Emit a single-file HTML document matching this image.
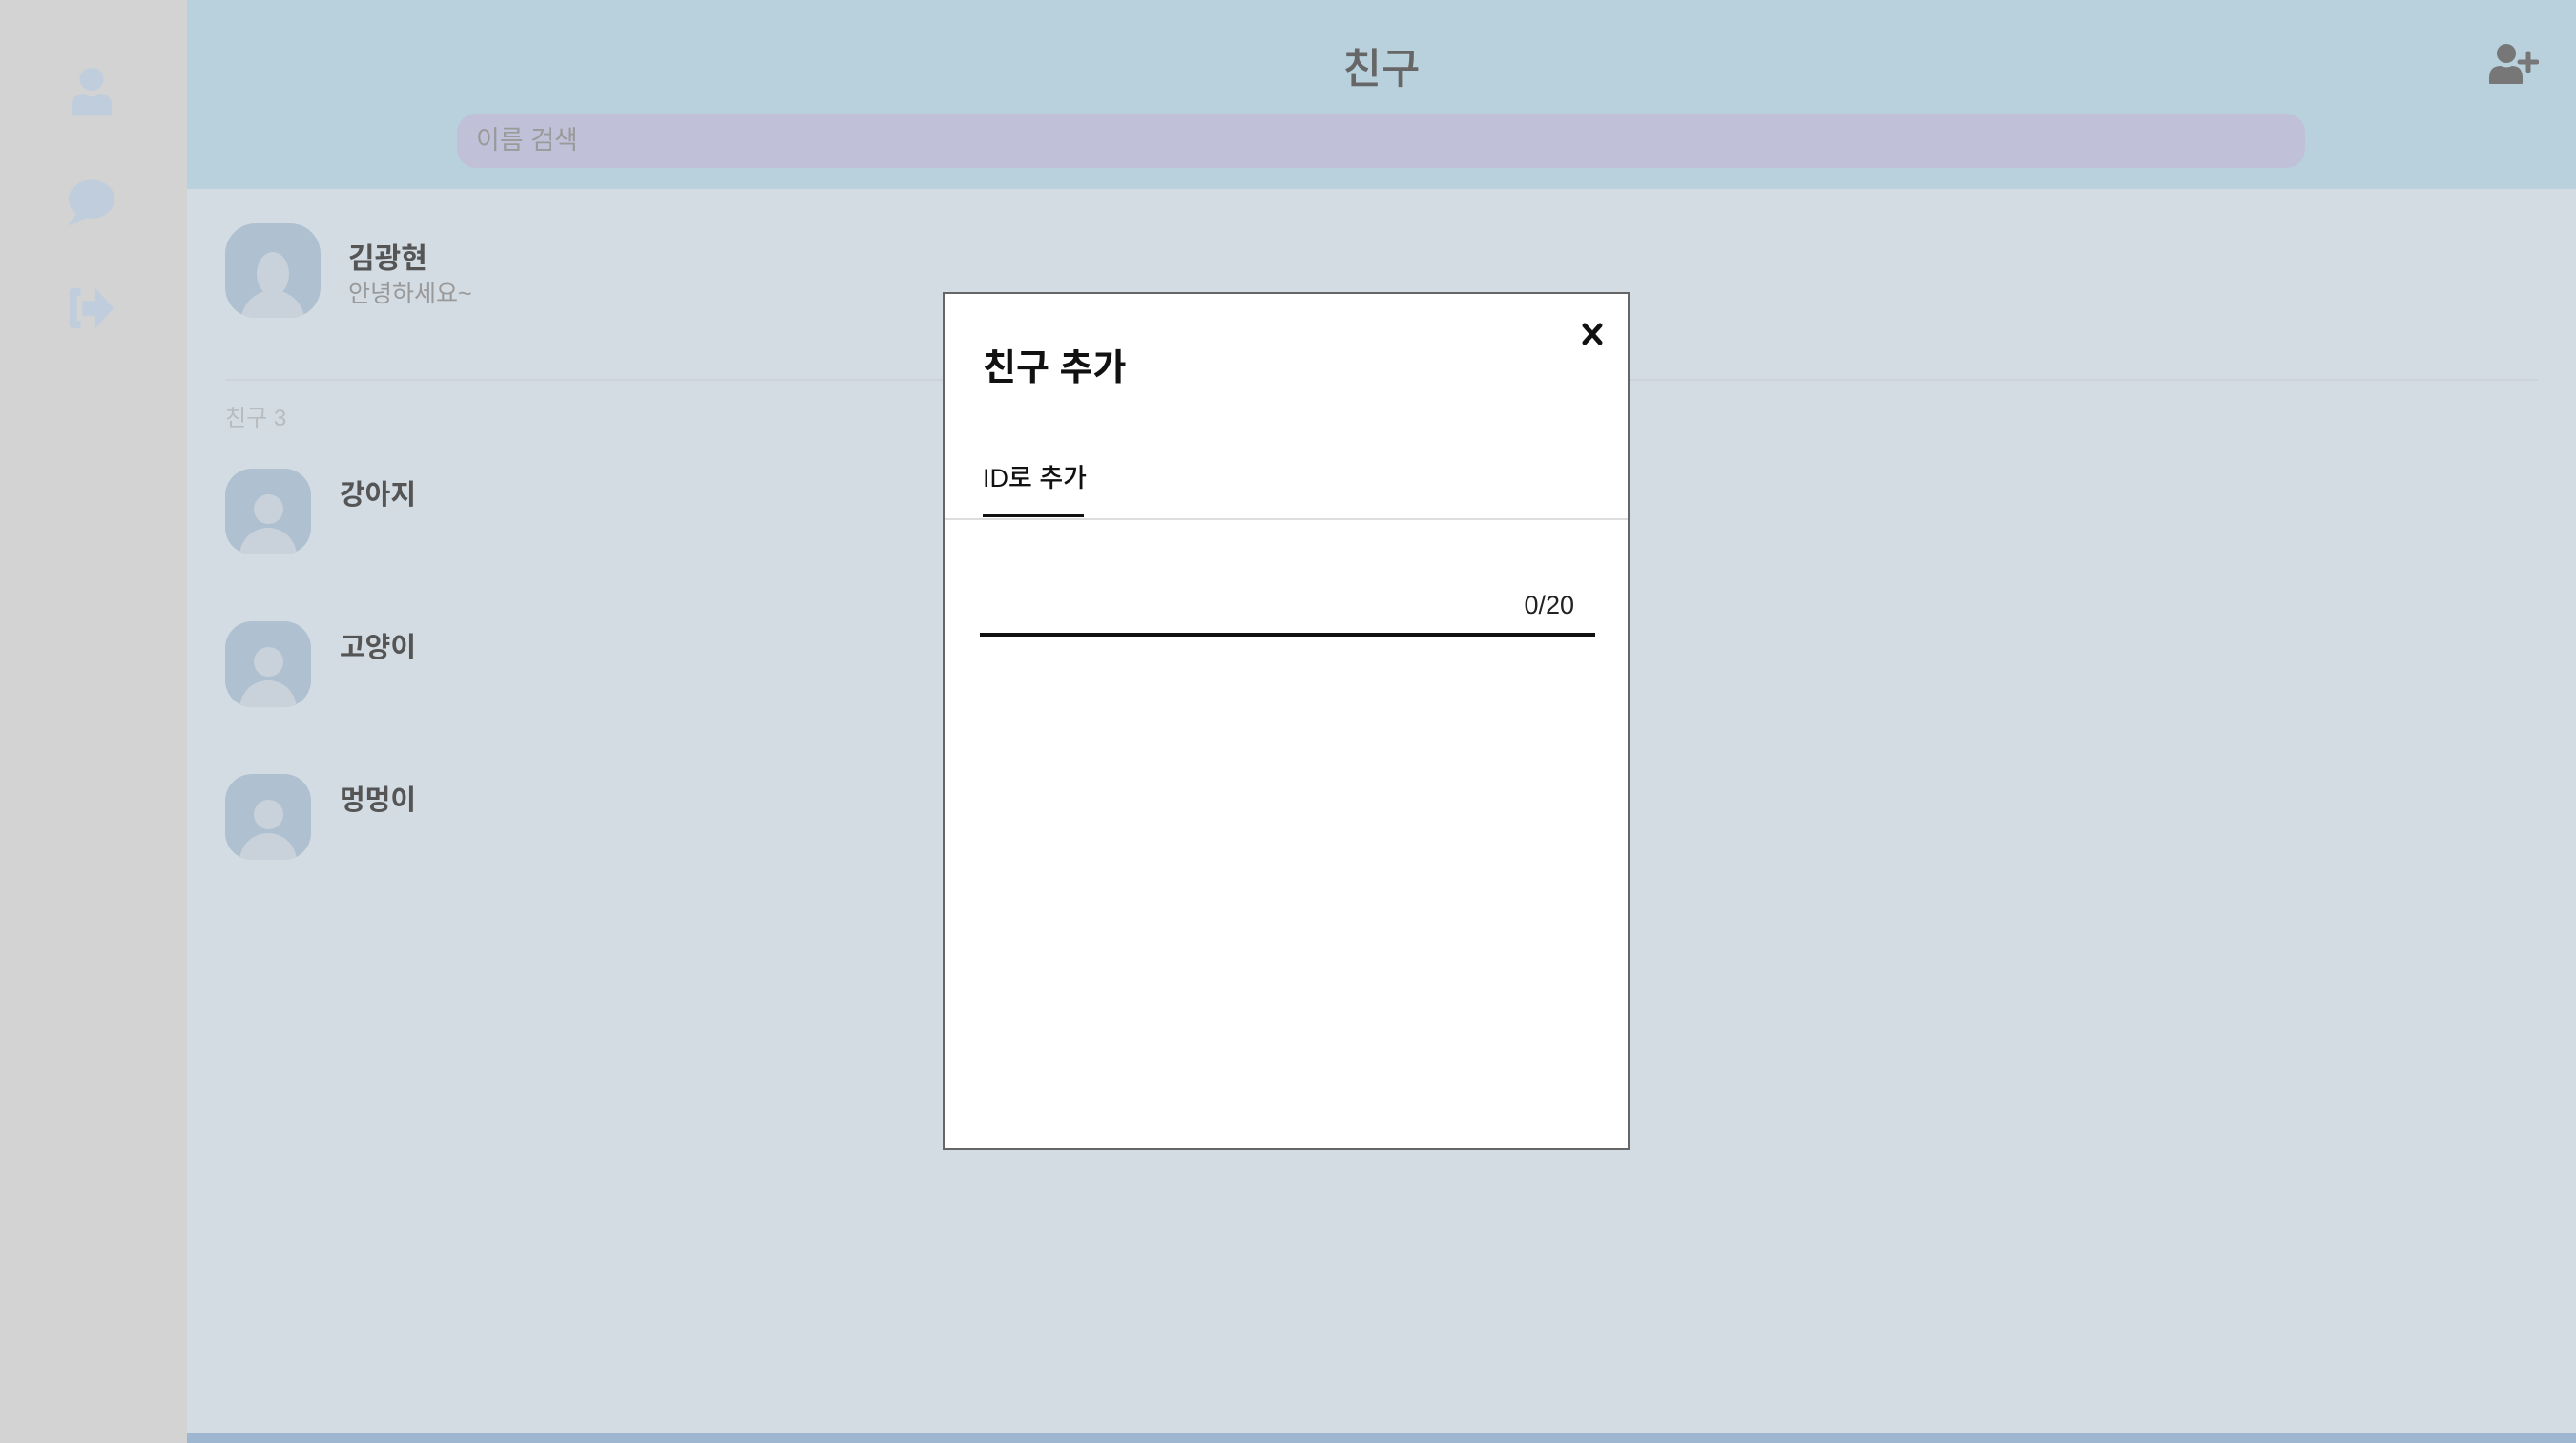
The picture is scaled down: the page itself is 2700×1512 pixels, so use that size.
<!DOCTYPE html>
<html><head><meta charset="utf-8"><style>
*{margin:0;padding:0;box-sizing:border-box}
body{width:2700px;height:1512px;overflow:hidden;background:#d4dce3;font-family:"Liberation Sans","Noto Sans CJK KR",sans-serif;position:relative}
.abs{position:absolute}
.side{left:0;top:0;width:196px;height:1512px;background:#d3d3d3}
.head{left:196px;top:0;width:2504px;height:198px;background:#b9d1dc}
.title{left:196px;width:2504px;top:45px;text-align:center;font-size:44px;color:#666;font-weight:500;line-height:56px}
.search{left:479px;top:119px;width:1937px;height:57px;border-radius:20px;background:#c0c1d9;font-size:27px;color:#9a9a9a;padding-left:20px;line-height:57px}
.av{background:#afc0d0;overflow:hidden}
.av .h{position:absolute;background:#c9d2da;border-radius:50%}
.name{font-size:29px;color:#555;font-weight:bold}
.modal{left:988px;top:306px;width:720px;height:899px;background:#fff;border:2px solid #666}
.bottom{left:196px;top:1502px;width:2504px;height:10px;background:#9fb6d0}
</style></head><body>
<div class="abs side"></div>
<div class="abs head"></div>
<div class="abs title">친구</div>
<div class="abs search">이름 검색</div>
<!-- sidebar icons -->
<svg class="abs" style="left:71px;top:67px" width="50" height="56" viewBox="0 0 50 70" preserveAspectRatio="none"><ellipse cx="25" cy="20" rx="12.5" ry="15" fill="#bfcddd"/><path d="M4 68 V52 Q4 40 18 40 Q25 46 32 40 Q46 40 46 52 V68 Z" fill="#bfcddd"/></svg>
<svg class="abs" style="left:69px;top:186px" width="54" height="50" viewBox="0 0 56 62" preserveAspectRatio="none"><circle cx="28" cy="28" r="25" fill="#bfcddd"/><path d="M2 62 Q12 50 12 40 L24 50 Q14 60 2 62Z" fill="#bfcddd"/></svg>
<svg class="abs" style="left:70px;top:298px" width="52" height="50" viewBox="0 0 52 52"><path d="M14 4 H6 Q2 4 2 8 V44 Q2 48 6 48 H14 V40 H10 V12 H14Z" fill="#bfcddd"/><path d="M16 18 H30 V4 L50 26 L30 48 V34 H16Z" fill="#bfcddd"/></svg>
<!-- add user -->
<svg class="abs" style="left:2609px;top:46px" width="52" height="44" viewBox="0 0 52 44"><circle cx="18" cy="10" r="10" fill="#777"/><path d="M0 41 V36 Q0 23 12 23 Q18 26 24 23 Q35 23 35 36 V41 Q35 42 34 42 H1 Q0 42 0 41Z" fill="#777"/><path d="M41 10 V28 M32 19 H50" stroke="#777" stroke-width="5" stroke-linecap="round"/></svg>
<!-- my profile -->
<div class="abs av" style="left:236px;top:234px;width:100px;height:99px;border-radius:32px"><div class="h" style="top:30px;width:34px;height:46px;left:33px"></div><div class="h" style="left:16px;top:70px;width:68px;height:70px"></div></div>
<div class="abs name" style="left:365px;top:246px;font-size:30px">김광현</div>
<div class="abs" style="left:365px;top:288px;font-size:25px;color:#999">안녕하세요~</div>
<div class="abs" style="left:236px;top:397px;width:2424px;height:2px;background:#ccd3da"></div>
<div class="abs" style="left:236px;top:418px;font-size:24px;color:#b8bcc0">친구 3</div>
<!-- friends -->
<div class="abs av" style="left:236px;top:491px;width:90px;height:90px;border-radius:28px"><div class="h" style="left:30px;top:27px;width:31px;height:31px"></div><div class="h" style="left:15px;top:62px;width:60px;height:60px"></div></div>
<div class="abs name" style="left:356px;top:495px">강아지</div>
<div class="abs av" style="left:236px;top:651px;width:90px;height:90px;border-radius:28px"><div class="h" style="left:30px;top:27px;width:31px;height:31px"></div><div class="h" style="left:15px;top:62px;width:60px;height:60px"></div></div>
<div class="abs name" style="left:356px;top:655px">고양이</div>
<div class="abs av" style="left:236px;top:811px;width:90px;height:90px;border-radius:28px"><div class="h" style="left:30px;top:27px;width:31px;height:31px"></div><div class="h" style="left:15px;top:62px;width:60px;height:60px"></div></div>
<div class="abs name" style="left:356px;top:815px">멍멍이</div>
<!-- modal -->
<div class="abs modal">
  <div class="abs" style="left:40px;top:46px;font-size:38px;color:#111;font-weight:bold">친구 추가</div>
  <svg class="abs" style="left:668px;top:30px" width="22" height="24" viewBox="0 0 22 24"><path d="M3 3 L19 21 M19 3 L3 21" stroke="#111" stroke-width="5" stroke-linecap="round"/></svg>
  <div class="abs" style="left:40px;top:171px;font-size:27px;color:#111;font-weight:500">ID로 추가</div>
  <div class="abs" style="left:40px;top:231px;width:106px;height:3px;background:#111"></div>
  <div class="abs" style="left:0;top:235px;width:716px;height:2px;background:#ddd"></div>
  <div class="abs" style="left:558px;top:311px;width:102px;text-align:right;font-size:27px;color:#222">0/20</div>
  <div class="abs" style="left:37px;top:355px;width:645px;height:4px;background:#111"></div>
</div>
<div class="abs bottom"></div>
</body></html>
